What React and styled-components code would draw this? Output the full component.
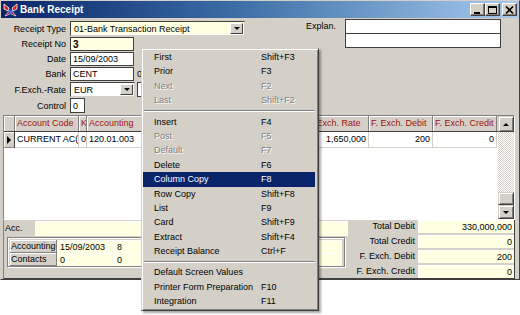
import React from "react";
import styled, { createGlobalStyle } from "styled-components";

const GlobalStyle = createGlobalStyle`
  html, body { margin: 0; padding: 0; background: #fff; }
  body { font-family: "Liberation Sans", Arial, sans-serif; font-size: 9px; color: #000; }
  * { box-sizing: border-box; }
`;

const Page = styled.div`
  position: relative;
  width: 520px;
  height: 315px;
`;

const Window = styled.div`
  width: 520px;
  height: 280px;
  background: #d4d0c8;
  border: 1px solid;
  border-color: #d4d0c8 #404040 #404040 #d4d0c8;
  display: flex;
  flex-direction: column;
`;

const TitleBar = styled.div`
  height: 17px;
  display: flex;
  align-items: center;
  padding: 0 2px 0 2px;
  background: linear-gradient(to right, #0a246a 0%, #3a6ea5 45%, #a6caf0 100%);
`;

const TitleText = styled.span`
  margin-left: 2px;
  color: #fff;
  font-weight: bold;
  font-size: 10px;
`;

const TitleButtons = styled.div`
  margin-left: auto;
  display: flex;
  align-items: center;
`;

const CaptionButton = styled.div`
  width: 15px;
  height: 13px;
  margin-left: ${(p) => (p.gap ? 2 : 0)}px;
  background: #d4d0c8;
  border: 1px solid;
  border-color: #fff #404040 #404040 #fff;
  box-shadow: inset -1px -1px #808080;
  display: flex;
  align-items: center;
  justify-content: center;
`;

const TopForm = styled.div`
  display: flex;
  height: 97px;
`;

const LeftForm = styled.div`
  width: 244px;
  display: flex;
  flex-direction: column;
  gap: 1px;
  padding-top: 3px;
`;

const FieldRow = styled.div`
  display: flex;
  align-items: center;
  height: ${(p) => p.h || 14}px;
`;

const Label = styled.span`
  width: 65px;
  margin-right: 4px;
  text-align: right;
  white-space: nowrap;
`;

const TextBox = styled.div`
  width: ${(p) => p.w}px;
  height: 100%;
  background: ${(p) => (p.yellow ? "#ffffe1" : "#fff")};
  border: 1px solid #404040;
  padding: 0 2px;
  display: flex;
  align-items: center;
  font-weight: ${(p) => (p.bold ? "bold" : "normal")};
  font-size: ${(p) => (p.bold ? 10 : 9)}px;
  white-space: nowrap;
  overflow: hidden;
`;

const Combo = styled.div`
  width: ${(p) => p.w}px;
  height: 100%;
  display: flex;
  align-items: center;
  background: ${(p) => (p.yellow ? "#ffffe1" : "#fff")};
  border: 1px solid;
  border-color: #404040 #d4d0c8 #d4d0c8 #404040;
  box-shadow: inset -1px -1px #fff;
  padding: 1px 1px 1px 3px;
`;

const ComboText = styled.span`
  flex: 1;
  white-space: nowrap;
`;

const DropButton = styled.div`
  width: 13px;
  height: 100%;
  background: #d4d0c8;
  border: 1px solid;
  border-color: #fff #404040 #404040 #fff;
  display: flex;
  align-items: center;
  justify-content: center;
`;

const Arrow = styled.div`
  width: 0;
  height: 0;
  border-left: 3px solid transparent;
  border-right: 3px solid transparent;
  border-top: ${(p) => (p.up ? "none" : "3px solid #000")};
  border-bottom: ${(p) => (p.up ? "3px solid #000" : "none")};
`;

const PlainText = styled.span`
  margin-left: 3px;
`;

const SideField = styled.div`
  margin-left: 2px;
  width: 60px;
  height: 100%;
  background: #fff;
  border: 1px solid #404040;
`;

const ExplanArea = styled.div`
  display: flex;
  padding-top: 1px;
`;

const ExplanLabel = styled.span`
  width: 91px;
  margin-right: 9px;
  text-align: right;
  line-height: 15px;
`;

const ExplanBoxes = styled.div`
  display: flex;
  flex-direction: column;
  width: 156px;
`;

const ExplanBox = styled.div`
  height: 15px;
  background: #fff;
  border: 1px solid #404040;
  & + & {
    margin-top: -1px;
  }
`;

const GridBox = styled.div`
  margin-left: 2px;
  width: 512px;
  height: 105px;
  border: 1px solid;
  border-color: #808080 #fff #fff #808080;
  display: flex;
  background: #fff;
`;

const TableArea = styled.div`
  flex: 1;
  display: flex;
  flex-direction: column;
`;

const COLS = "11px 64px 8px 58px 80px 80px 64px 64px 64px";

const HeaderRow = styled.div`
  display: grid;
  grid-template-columns: ${COLS};
  height: 16px;
  background: #d4d0c8;
  border-bottom: 1px solid #404040;
`;

const HeaderCell = styled.div`
  border-right: 1px solid #808080;
  box-shadow: inset 1px 1px #fff;
  color: #a01010;
  padding: 0 2px;
  line-height: 15px;
  white-space: nowrap;
  overflow: hidden;
`;

const DataRow = styled.div`
  display: grid;
  grid-template-columns: ${COLS};
  height: 16px;
`;

const DataCell = styled.div`
  border-right: 1px solid #d4d0c8;
  border-bottom: 1px solid #d4d0c8;
  padding: 0 2px;
  line-height: 15px;
  text-align: ${(p) => p.align || "left"};
  white-space: nowrap;
  overflow: hidden;
`;

const IndicatorCell = styled.div`
  background: #d4d0c8;
  border-right: 1px solid #404040;
  border-bottom: 1px solid #808080;
  box-shadow: inset 1px 1px #fff;
  display: flex;
  align-items: center;
  justify-content: center;
`;

const RowPointer = styled.div`
  width: 0;
  height: 0;
  border-top: 4px solid transparent;
  border-bottom: 4px solid transparent;
  border-left: 4px solid #000;
`;

const ScrollBar = styled.div`
  width: 16px;
  display: flex;
  flex-direction: column;
  background: repeating-conic-gradient(#fff 0 25%, #d4d0c8 0 50%) 0 0 / 2px 2px;
`;

const ScrollButton = styled.div`
  height: ${(p) => p.h}px;
  background: #d4d0c8;
  border: 1px solid;
  border-color: #d4d0c8 #404040 #404040 #d4d0c8;
  box-shadow: inset 1px 1px #fff, inset -1px -1px #808080;
  display: flex;
  align-items: center;
  justify-content: center;
`;

const ScrollTrack = styled.div`
  flex: 1;
  display: flex;
  flex-direction: column;
  justify-content: flex-end;
`;

const BottomPanel = styled.div`
  margin-left: 2px;
  width: 512px;
  height: 59px;
  display: flex;
  border-left: 1px solid #808080;
  border-right: 1px solid #404040;
  border-bottom: 1px solid #404040;
`;

const BottomLeft = styled.div`
  width: 344px;
  padding-top: 1px;
  display: flex;
  flex-direction: column;
`;

const AccRow = styled.div`
  display: flex;
  height: 15px;
`;

const AccLabel = styled.span`
  width: 31px;
  padding-left: 1px;
  line-height: 15px;
`;

const YellowField = styled.div`
  flex: ${(p) => (p.w ? "none" : 1)};
  width: ${(p) => (p.w ? `${p.w}px` : "auto")};
  background: #ffffe1;
  border-top: 1px solid #fff;
  border-left: 1px solid #fff;
  padding: 0 2px;
  text-align: ${(p) => p.align || "left"};
  line-height: 12px;
  white-space: nowrap;
  overflow: hidden;
`;

const GroupBox = styled.div`
  margin: 1px 0 0 3px;
  width: 338px;
  height: 30px;
  border: 1px solid #808080;
  box-shadow: inset 1px 1px #fff, 1px 1px #fff;
  padding: 2px 2px;
  display: flex;
  flex-direction: column;
`;

const GroupRow = styled.div`
  display: grid;
  grid-template-columns: 47px 57px 1fr;
  height: 13px;
`;

const GroupLabel = styled.div`
  background: #d4d0c8;
  border-right: 1px solid #808080;
  border-bottom: 1px solid #808080;
  box-shadow: inset 1px 1px #fff;
  padding-left: 1px;
  line-height: 12px;
  white-space: nowrap;
  overflow: hidden;
`;

const BottomRight = styled.div`
  flex: 1;
  display: flex;
  flex-direction: column;
  gap: 2px;
`;

const TotalRow = styled.div`
  display: flex;
  height: 13px;
`;

const TotalLabel = styled.span`
  flex: 1;
  text-align: right;
  padding-right: 3px;
  line-height: 13px;
`;

const Menu = styled.div`
  position: absolute;
  left: 141px;
  top: 48px;
  z-index: 10;
  width: 178px;
  height: 263px;
  background: #d4d0c8;
  border: 1px solid;
  border-color: #d4d0c8 #404040 #404040 #d4d0c8;
  box-shadow: inset 1px 1px #fff, inset -1px -1px #808080, 2px 2px 2px rgba(0, 0, 0, 0.35);
  padding: 1px 3px 1px 1px;
`;

const MenuItem = styled.div`
  display: grid;
  grid-template-columns: 107px 1fr;
  height: 14.4px;
  line-height: 14.4px;
  padding-left: 11px;
  white-space: nowrap;
  background: ${(p) => (p.active ? "#0a246a" : "transparent")};
  color: ${(p) => (p.active ? "#fff" : p.disabled ? "#808080" : "#000")};
  text-shadow: ${(p) => (p.disabled ? "1px 1px 0 #fff" : "none")};
`;

const Separator = styled.div`
  height: 7px;
  display: flex;
  align-items: center;
  padding: 0 0 0 1px;
  &::after {
    content: "";
    flex: 1;
    border-top: 1px solid #808080;
    border-bottom: 1px solid #fff;
  }
`;

const AppIcon = () => (
  <svg width="15" height="14" viewBox="0 0 15 14">
    <path d="M1 1 L6 5 L5 8 L1 6 Z" fill="#d42020" stroke="#fff" strokeWidth="0.8" />
    <path d="M14 1 L9 5 L10 8 L14 6 Z" fill="#d42020" stroke="#fff" strokeWidth="0.8" />
    <path d="M2 13 L6 8 L7 11 Z" fill="#c01818" stroke="#fff" strokeWidth="0.6" />
    <path d="M13 13 L9 8 L8 11 Z" fill="#c01818" stroke="#fff" strokeWidth="0.6" />
    <circle cx="7.5" cy="9" r="2.2" fill="#3a6ee8" />
  </svg>
);

const MinGlyph = () => (
  <svg width="9" height="8" viewBox="0 0 9 8">
    <rect x="1" y="6" width="6" height="2" fill="#000" />
  </svg>
);

const MaxGlyph = () => (
  <svg width="9" height="8" viewBox="0 0 9 8">
    <rect x="0.5" y="0.5" width="8" height="7" fill="none" stroke="#000" />
    <rect x="0" y="0" width="9" height="2" fill="#000" />
  </svg>
);

const CloseGlyph = () => (
  <svg width="9" height="8" viewBox="0 0 9 8">
    <path d="M1 0.5 L8 7.5 M8 0.5 L1 7.5" stroke="#000" strokeWidth="1.6" />
  </svg>
);

const menuItems = [
  { label: "First", key: "Shift+F3" },
  { label: "Prior", key: "F3" },
  { label: "Next", key: "F2", disabled: true },
  { label: "Last", key: "Shift+F2", disabled: true },
  { sep: true },
  { label: "Insert", key: "F4" },
  { label: "Post", key: "F5", disabled: true },
  { label: "Default", key: "F7", disabled: true },
  { label: "Delete", key: "F6" },
  { label: "Column Copy", key: "F8", active: true },
  { label: "Row Copy", key: "Shift+F8" },
  { label: "List", key: "F9" },
  { label: "Card", key: "Shift+F9" },
  { label: "Extract", key: "Shift+F4" },
  { label: "Receipt Balance", key: "Ctrl+F" },
  { sep: true },
  { label: "Default Screen Values", key: "" },
  { label: "Printer Form Preparation", key: "F10" },
  { label: "Integration", key: "F11" },
];

// columns behind the popup menu are left empty
const headers = ["", "Account Code", "K", "Accounting", "", "", "F. Exch. Rate", "F. Exch. Debit", "F. Exch. Credit"];

const totals = [
  ["Total Debit", "330,000,000"],
  ["Total Credit", "0"],
  ["F. Exch. Debit", "200"],
  ["F. Exch. Credit", "0"],
];

export default function App() {
  return (
    <Page>
      <GlobalStyle />
      <Window>
        <TitleBar>
          <AppIcon />
          <TitleText>Bank Receipt</TitleText>
          <TitleButtons>
            <CaptionButton><MinGlyph /></CaptionButton>
            <CaptionButton><MaxGlyph /></CaptionButton>
            <CaptionButton gap><CloseGlyph /></CaptionButton>
          </TitleButtons>
        </TitleBar>

        <TopForm>
          <LeftForm>
            <FieldRow h={15}>
              <Label>Receipt Type</Label>
              <Combo w={175} yellow>
                <ComboText>01-Bank Transaction Receipt</ComboText>
                <DropButton><Arrow /></DropButton>
              </Combo>
            </FieldRow>
            <FieldRow>
              <Label>Receipt No</Label>
              <TextBox w={64} yellow bold>3</TextBox>
            </FieldRow>
            <FieldRow>
              <Label>Date</Label>
              <TextBox w={64}>15/09/2003</TextBox>
            </FieldRow>
            <FieldRow>
              <Label>Bank</Label>
              <TextBox w={64}>CENT</TextBox>
              <PlainText>0</PlainText>
            </FieldRow>
            <FieldRow h={15}>
              <Label>F.Exch.-Rate</Label>
              <Combo w={65}>
                <ComboText>EUR</ComboText>
                <DropButton><Arrow /></DropButton>
              </Combo>
              <SideField />
            </FieldRow>
            <FieldRow h={15}>
              <Label>Control</Label>
              <TextBox w={15}>0</TextBox>
            </FieldRow>
          </LeftForm>
          <ExplanArea>
            <ExplanLabel>Explan.</ExplanLabel>
            <ExplanBoxes>
              <ExplanBox />
              <ExplanBox />
            </ExplanBoxes>
          </ExplanArea>
        </TopForm>

        <GridBox>
          <TableArea>
            <HeaderRow>
              {headers.map((h, i) => (
                <HeaderCell key={i}>{h}</HeaderCell>
              ))}
            </HeaderRow>
            <DataRow>
              <IndicatorCell><RowPointer /></IndicatorCell>
              <DataCell>CURRENT AC(</DataCell>
              <DataCell>0</DataCell>
              <DataCell>120.01.003</DataCell>
              <DataCell />
              <DataCell />
              <DataCell align="right">1,650,000</DataCell>
              <DataCell align="right">200</DataCell>
              <DataCell align="right">0</DataCell>
            </DataRow>
          </TableArea>
          <ScrollBar>
            <ScrollButton h={16}><Arrow up /></ScrollButton>
            <ScrollTrack>
              <ScrollButton h={13} />
            </ScrollTrack>
            <ScrollButton h={14}><Arrow /></ScrollButton>
          </ScrollBar>
        </GridBox>

        <BottomPanel>
          <BottomLeft>
            <AccRow>
              <AccLabel>Acc.</AccLabel>
              <YellowField />
            </AccRow>
            <GroupBox>
              <GroupRow>
                <GroupLabel>Accounting</GroupLabel>
                <YellowField>15/09/2003</YellowField>
                <YellowField>8</YellowField>
              </GroupRow>
              <GroupRow>
                <GroupLabel>Contacts</GroupLabel>
                <YellowField>0</YellowField>
                <YellowField>0</YellowField>
              </GroupRow>
            </GroupBox>
          </BottomLeft>
          <BottomRight>
            {totals.map(([label, value]) => (
              <TotalRow key={label}>
                <TotalLabel>{label}</TotalLabel>
                <YellowField w={96} align="right">{value}</YellowField>
              </TotalRow>
            ))}
          </BottomRight>
        </BottomPanel>
      </Window>

      <Menu>
        {menuItems.map((m, i) =>
          m.sep ? (
            <Separator key={i} />
          ) : (
            <MenuItem key={i} active={m.active} disabled={m.disabled}>
              <span>{m.label}</span>
              <span>{m.key}</span>
            </MenuItem>
          )
        )}
      </Menu>
    </Page>
  );
}
